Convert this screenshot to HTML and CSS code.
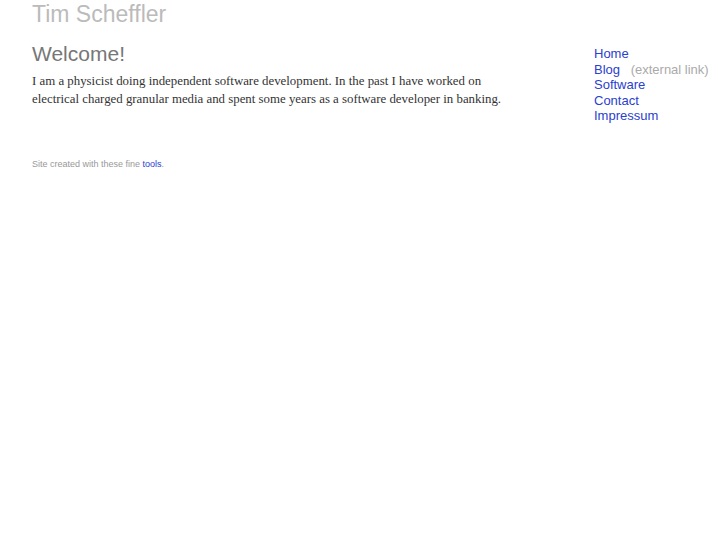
FILE: index.html
```html
<!DOCTYPE html>
<html lang="en">
<head>
    <meta charset="UTF-8">
    <title>Tim Scheffler</title>
    <link rel="stylesheet" href="styles.css">
</head>
<body>
    <div class="page">
        <div class="site-title">Tim Scheffler</div>
        <div class="columns">
            <div class="content">
                <h1>Welcome!</h1>
                <p>I am a physicist doing independent software development. In the past I have worked on electrical charged granular media and spent some years as a software developer in banking.</p>
                <div class="footer">Site created with these fine <a href="#">tools</a>.</div>
            </div>
            <ul class="nav">
                <li><a href="#">Home</a></li>
                <li><a href="#">Blog</a> <span class="note">(external link)</span></li>
                <li><a href="#">Software</a></li>
                <li><a href="#">Contact</a></li>
                <li><a href="#">Impressum</a></li>
            </ul>
        </div>
    </div>
</body>
</html>
```

FILE: styles.css
```css
body {
    margin: 0;
    background: white;
    font-family: "Liberation Sans", Arial, sans-serif;
}
a {
    color: #2a40d0;
    text-decoration: none;
}
.page {
    padding: 0 0 0 32px;
}
.site-title {
    font-size: 23px;
    color: #bbb;
    line-height: 26px;
    padding-top: 1px;
}
.columns {
    display: flex;
}
.content {
    width: 480px;
}
h1 {
    font-size: 21px;
    font-weight: normal;
    color: #777;
    margin: 14px 0 0 0;
    line-height: 26px;
}
p {
    font-family: "Liberation Serif", "Times New Roman", serif;
    font-size: 12.85px;
    line-height: 18px;
    color: #333;
    margin: 5px 0 0 0;
}
.footer {
    margin-top: 51px;
    font-size: 9px;
    color: #999;
}
.nav {
    list-style: none;
    margin: 19px 0 0 82px;
    padding: 0;
    font-size: 13px;
    line-height: 15.5px;
}
.note {
    color: #aaa;
    margin-left: 7px;
}
```
